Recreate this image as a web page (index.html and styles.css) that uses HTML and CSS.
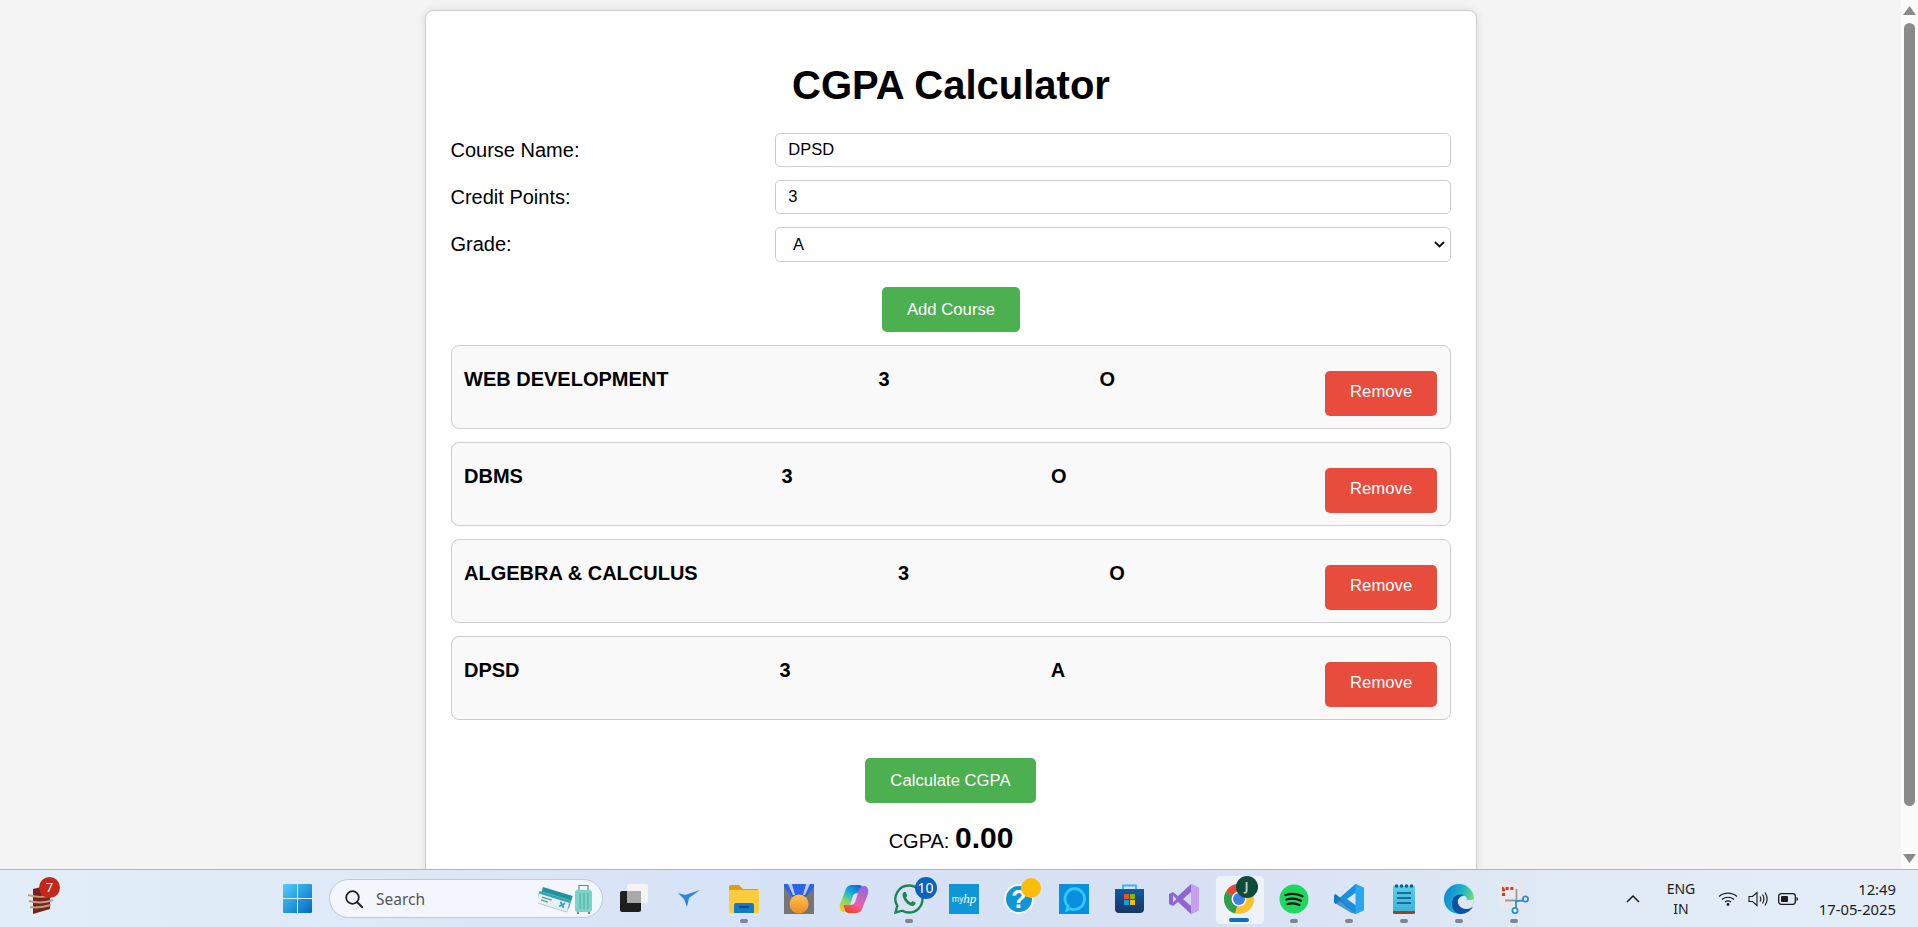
FILE: index.html
```html
<!DOCTYPE html>
<html lang="en">
  <head>
    <meta charset="UTF-8" />
    <title>CGPA Calculator</title>
    <link rel="stylesheet" href="styles.css">
  </head>
  <body>
    <div class="page">
      <main class="scroll-area">
        <section class="card">
          <h1>CGPA Calculator</h1>
          <div class="form-row">
            <label for="name">Course Name:</label>
            <input id="name" type="text" value="DPSD" />
          </div>
          <div class="form-row">
            <label for="credit">Credit Points:</label>
            <input id="credit" type="text" value="3" />
          </div>
          <div class="form-row">
            <label for="grade">Grade:</label>
            <div class="select-wrap">
              <select id="grade"><option>A</option></select>
              <svg class="select-arrow" width="11" height="7" viewBox="0 0 11 7">
                <path d="M1 1l4.5 4.5L10 1" fill="none" stroke="#111" stroke-width="1.9" />
              </svg>
            </div>
          </div>
          <button class="btn btn-green add-btn">Add Course</button>
          <div class="course">
            <span>WEB DEVELOPMENT</span><span>3</span><span>O</span>
            <button class="btn btn-red">Remove</button>
          </div>
          <div class="course">
            <span>DBMS</span><span>3</span><span>O</span>
            <button class="btn btn-red">Remove</button>
          </div>
          <div class="course">
            <span>ALGEBRA &amp; CALCULUS</span><span>3</span><span>O</span>
            <button class="btn btn-red">Remove</button>
          </div>
          <div class="course">
            <span>DPSD</span><span>3</span><span>A</span>
            <button class="btn btn-red">Remove</button>
          </div>
          <button class="btn btn-green calc-btn">Calculate CGPA</button>
          <p class="result">CGPA: <strong>0.00</strong></p>
        </section>
      </main>
      <div class="scrollbar">
        <svg width="13" height="9" viewBox="0 0 13 9"><path d="M6.5 0 13 9H0z" fill="#8a8a8a" /></svg>
        <div class="thumb"></div>
        <svg width="13" height="9" viewBox="0 0 13 9"><path d="M0 0h13L6.5 9z" fill="#8a8a8a" /></svg>
      </div>
    </div>

    <footer class="taskbar">
      <div class="widget">
        <svg width="26" height="30" viewBox="0 0 26 30">
          <path d="M5 5 22 1v24L5 30z" fill="#74261a" />
          <path d="M0 11c8 3 17 2 25 0M1 17c8 2 16 2 24-1M2 23c7 1 14 0 21-2" fill="none" stroke="#c79a80" stroke-width="2" />
        </svg>
        <span class="badge badge-red">7</span>
      </div>
      <svg class="win-logo" width="29" height="29" viewBox="0 0 29 29">
        <defs>
          <linearGradient id="win" x1="0" y1="0" x2="1" y2="1">
            <stop offset="0" stop-color="#52cdfb" />
            <stop offset="1" stop-color="#0069c4" />
          </linearGradient>
        </defs>
        <path d="M1 0h13v14H0V1a1 1 0 0 1 1-1zM15 0h13a1 1 0 0 1 1 1v13H15zM0 15h14v14H1a1 1 0 0 1-1-1zM15 15h14v13a1 1 0 0 1-1 1H15z" fill="url(#win)" />
      </svg>
      <div class="search">
        <svg width="18" height="18" viewBox="0 0 18 18">
          <circle cx="7.5" cy="7.5" r="6.3" fill="none" stroke="#1f1f1f" stroke-width="1.8" />
          <path d="m12 12 5 5" stroke="#1f1f1f" stroke-width="2" stroke-linecap="round" />
        </svg>
        <span class="search-text">Search</span>
        <svg class="search-art" width="58" height="30" viewBox="0 0 58 30">
          <g transform="rotate(17 17 15)">
            <rect x="2" y="7" width="31" height="13" fill="#1f93a0" />
            <rect x="0" y="12" width="32" height="12" fill="#e8f0f3" stroke="#9fb8c4" stroke-width=".6" />
            <rect x="0" y="12" width="32" height="2.5" fill="#2fa6ad" />
            <path d="M4 17h10M4 20h7" stroke="#6d8ea3" stroke-width="1.3" />
            <path d="M23 16l5 5M28 16l-5 5" stroke="#3a9fc0" stroke-width="1.8" />
          </g>
          <rect x="37" y="6" width="17" height="22" rx="2.5" fill="#7bd3c5" />
          <path d="M41 6V1.5h9V6" fill="none" stroke="#62868c" stroke-width="1.2" />
          <path d="M42 9v16M46 9v16M50 9v16" stroke="#4aa99d" stroke-width=".9" />
          <path d="M40 28v2M51 28v2" stroke="#4c5f70" stroke-width="1.5" />
        </svg>
      </div>

      <div class="apps">
        <div class="slot">
          <svg width="30" height="29" viewBox="0 0 30 29">
            <rect x="1" y="7" width="21" height="21" rx="2" fill="#1e1e1e" />
            <rect x="8" y="0" width="21" height="19" rx="2" fill="#f4f4f4" />
            <rect x="8" y="7" width="14" height="12" fill="#a9a9a9" />
          </svg>
        </div>
        <div class="slot">
          <svg width="22" height="17" viewBox="0 0 22 17">
            <path d="M0 3 7 5 13 3 22 0 15 5 11 8 9 17 6 9z" fill="#2d86dd" />
          </svg>
        </div>
        <div class="slot">
          <svg width="30" height="28" viewBox="0 0 30 28">
            <path d="M0 2a2 2 0 0 1 2-2h8l4 4h14a2 2 0 0 1 2 2v4H0z" fill="#d9a00f" />
            <path d="M0 5h30v21a2 2 0 0 1-2 2H2a2 2 0 0 1-2-2z" fill="#fdcb3e" />
            <path d="M5 20a2 2 0 0 1 2-2h16a2 2 0 0 1 2 2v8H5z" fill="#1479c9" />
            <path d="M10 22h10" stroke="#0b3f78" stroke-width="1.5" />
          </svg>
          <i class="dot"></i>
        </div>
        <div class="slot">
          <svg width="30" height="30" viewBox="0 0 30 30">
            <defs>
              <linearGradient id="medal" x1="0" y1="0" x2="0" y2="1">
                <stop offset="0" stop-color="#fcc34a" />
                <stop offset="1" stop-color="#ef8a2c" />
              </linearGradient>
            </defs>
            <rect width="30" height="30" fill="#767676" />
            <path d="M0 0h30v3l-8 10H8L0 3z" fill="#2d63e6" />
            <path d="M4 0h4l3 11H9zM22 0h4l-5 11h-2z" fill="#b5cdf7" />
            <circle cx="15" cy="20" r="9.5" fill="url(#medal)" />
          </svg>
        </div>
        <div class="slot">
          <svg width="30" height="30" viewBox="0 0 30 30">
            <defs>
              <linearGradient id="cop1" x1="0.7" y1="0" x2="0.2" y2="1">
                <stop offset="0" stop-color="#1468d8" />
                <stop offset="0.35" stop-color="#17b3d8" />
                <stop offset="0.65" stop-color="#7ed86a" />
                <stop offset="1" stop-color="#f8c81e" />
              </linearGradient>
              <linearGradient id="cop2" x1="0.7" y1="0" x2="0.2" y2="1">
                <stop offset="0" stop-color="#f4431f" />
                <stop offset="0.35" stop-color="#ef5ea8" />
                <stop offset="1" stop-color="#8a6be8" />
              </linearGradient>
            </defs>
            <path d="M13 1h7c2 0 3.500 1 4 3l1.500 5H19c-3 0-4.500 1-5.500 4l-3 10c-1 3-3 5-6 5C1.500 28 0 24 1 20L7 5c1-3 3.500-4 6-4z" fill="url(#cop1)" />
            <path d="M13 1h7c2 0 3.500 1 4 3l1.500 5H19c-3 0-4.500 1-5.500 4l-3 10c-1 3-3 5-6 5C1.500 28 0 24 1 20L7 5c1-3 3.500-4 6-4z" fill="url(#cop2)" transform="rotate(180 15 15)" />
          </svg>
        </div>
        <div class="slot">
          <svg width="30" height="30" viewBox="0 0 30 30">
            <path d="M15 1.500a13.500 13.500 0 0 1 0 27c-2.500 0-4.700-.7-6.700-1.800L1.500 28.500l1.800-6.600A13.500 13.500 0 0 1 15 1.500z" fill="none" stroke="#1b8755" stroke-width="2.4" />
            <path d="M10 8c-2 1.500-2 4 0 7.500s5 6 8 6.500c2.500 0 4-2 3.500-3.500l-3-1.500-1.500 1.500c-2-.7-4-3-5-5l1.400-1.500L11.800 8z" fill="#1b8755" />
          </svg>
          <span class="badge badge-blue">10</span>
          <i class="dot"></i>
        </div>
        <div class="slot">
          <div class="myhp">my<em>hp</em></div>
        </div>
        <div class="slot">
          <svg width="30" height="30" viewBox="0 0 30 30">
            <circle cx="15" cy="15" r="14" fill="#1296d3" stroke="#f2f8fc" stroke-width="2" />
            <text x="15" y="24" text-anchor="middle" class="help-mark">?</text>
          </svg>
          <i class="yellow-dot"></i>
        </div>
        <div class="slot">
          <svg width="30" height="30" viewBox="0 0 30 30">
            <rect width="30" height="30" fill="#0a8fe0" />
            <path d="M15 4.500a10.500 10.500 0 1 1-4 20.200L8 26l1-3.800A10.500 10.500 0 0 1 15 4.500z" fill="none" stroke="#35c8f0" stroke-width="2.8" />
          </svg>
        </div>
        <div class="slot">
          <svg width="29" height="29" viewBox="0 0 29 29">
            <defs>
              <linearGradient id="bag" x1="0" y1="0" x2="0" y2="1">
                <stop offset="0" stop-color="#0f5aa6" />
                <stop offset="1" stop-color="#1a3564" />
              </linearGradient>
            </defs>
            <path d="M8 5V1.500h13V5" fill="none" stroke="#35b8ea" stroke-width="1.8" />
            <path d="M0 5h29v20a4 4 0 0 1-4 4H4a4 4 0 0 1-4-4z" fill="url(#bag)" />
            <rect x="9" y="10" width="5" height="5" fill="#f25022" />
            <rect x="15" y="10" width="5" height="5" fill="#7fba00" />
            <rect x="9" y="16" width="5" height="5" fill="#00a4ef" />
            <rect x="15" y="16" width="5" height="5" fill="#ffb900" />
          </svg>
        </div>
        <div class="slot">
          <svg width="30" height="30" viewBox="0 0 30 30">
            <path d="M22 0 30 4v22l-8 4L9 18l-5 4-4-2V10l4-2 5 4z" fill="#8f67cf" />
            <path d="M22 0 30 4v22l-8 4z" fill="#c79ff0" />
            <path d="M4 11.500v7l3.500-3.500zM22 8l-8 7 8 7z" fill="#d9d6ef" />
          </svg>
        </div>
        <div class="slot chrome-slot">
          <svg width="30" height="30" viewBox="0 0 30 30">
            <circle cx="15" cy="15" r="15" fill="#fbc22d" />
            <path d="M15 15 2 7.500A15 15 0 0 0 11 29.500z" fill="#2f9e4f" />
            <path d="M15 15 2 7.500a15 15 0 0 1 26 0z" fill="#e4483a" />
            <circle cx="15" cy="15" r="7.5" fill="#fff" />
            <circle cx="15" cy="15" r="6" fill="#3f7fe8" />
          </svg>
          <span class="badge badge-dark">J</span>
          <i class="active-bar"></i>
        </div>
        <div class="slot">
          <svg width="30" height="30" viewBox="0 0 30 30">
            <circle cx="15" cy="15" r="14.5" fill="#1ed760" />
            <path d="M6.500 11c5.500-1.700 12-1.300 17 1.300M7.500 15.500c4.700-1.300 10-1 14.500 1.200M8.500 20c4-1 8.500-.8 12 1" fill="none" stroke="#111" stroke-width="2.3" stroke-linecap="round" />
          </svg>
          <i class="dot"></i>
        </div>
        <div class="slot">
          <svg width="30" height="30" viewBox="0 0 30 30">
            <path d="M21.500 0 30 4v22l-8.500 4L6 16.500 1.500 20 0 18.500v-7L1.500 10 6 13.500zM22 8.500 13 15l9 6.500z" fill="#1b8fdb" />
            <path d="M21.500 0 30 4v22l-8.500 4z" fill="#28a7ee" />
            <path d="M0 11.500 1.500 10l20 20-4-1L0 18.500z" fill="#0c72ba" opacity=".7" />
          </svg>
          <i class="dot"></i>
        </div>
        <div class="slot">
          <svg width="22" height="30" viewBox="0 0 22 30">
            <defs>
              <linearGradient id="pad" x1="0" y1="0" x2="0" y2="1">
                <stop offset="0" stop-color="#58cdea" />
                <stop offset="1" stop-color="#3fb4dc" />
              </linearGradient>
            </defs>
            <path d="M0 3a1 1 0 0 1 1-1h20a1 1 0 0 1 1 1v24H0z" fill="url(#pad)" />
            <path d="M0 27h22v1.500a1.500 1.500 0 0 1-1.500 1.500h-19A1.500 1.500 0 0 1 0 28.500z" fill="#8a4a2a" />
            <path d="M4 9h14M4 14h14M4 19h14" stroke="#1a6d95" stroke-width="1.8" />
            <circle cx="3.5" cy="2" r="1.8" fill="#15607f" />
            <circle cx="8.5" cy="2" r="1.8" fill="#15607f" />
            <circle cx="13.5" cy="2" r="1.8" fill="#15607f" />
            <circle cx="18.5" cy="2" r="1.8" fill="#15607f" />
          </svg>
          <i class="dot"></i>
        </div>
        <div class="slot">
          <svg width="30" height="30" viewBox="0 0 30 30">
            <defs>
              <linearGradient id="edge1" x1="0" y1="0.3" x2="1" y2="0.6">
                <stop offset="0" stop-color="#0f86d8" />
                <stop offset="0.55" stop-color="#1fb5c8" />
                <stop offset="1" stop-color="#7fe06a" />
              </linearGradient>
            </defs>
            <circle cx="15" cy="15" r="15" fill="url(#edge1)" />
            <path d="M13 19c0-4 3-7 7-7 2 0 3 1.500 2.500 3.500 3 1 5.500.8 7.500-.5-.5 5-2 8-6 11-3 2-6 1-8 0-2-2-3-4-3-7z" fill="#dfe7f6" />
            <path d="M8 20c0-7 5-11 12-9-4 1-7 4-6 8 1 4 5 6 9 6 2 0 4-1 6-2-3 4-7 7-12 7-5 0-9-4-9-10z" fill="#0a52a8" />
          </svg>
          <i class="dot"></i>
        </div>
        <div class="slot">
          <svg width="30" height="30" viewBox="0 0 30 30">
            <rect width="22" height="23" rx="2" fill="#e9e9ec" />
            <path d="M4.500 12V4.500H16" fill="none" stroke="#d8391f" stroke-width="3" stroke-dasharray="3 1.8" />
            <path d="M17.500 5v11.500H6" fill="none" stroke="#9b9b9b" stroke-width="1.8" />
            <path d="M24 16.500 17 17l0 7" fill="none" stroke="#2a8fd8" stroke-width="1.8" />
            <circle cx="26.5" cy="15" r="2.6" fill="#fff" stroke="#2a8fd8" stroke-width="1.8" />
            <circle cx="16" cy="26.5" r="2.6" fill="#fff" stroke="#2a8fd8" stroke-width="1.8" />
          </svg>
          <i class="dot"></i>
        </div>
      </div>

      <div class="tray">
        <svg class="chevron" width="14" height="8" viewBox="0 0 14 8">
          <path d="M1 7l6-6 6 6" fill="none" stroke="#1a1a1a" stroke-width="1.5" />
        </svg>
        <div class="lang">ENG<br />IN</div>
        <svg width="20" height="15" viewBox="0 0 20 15">
          <path d="M1 5.500c5-4.600 13-4.600 18 0M4 8.500c3.400-3 8.600-3 12 0M7 11c1.700-1.400 4.300-1.400 6 0" fill="none" stroke="#1c1c1c" stroke-width="1.2" />
          <circle cx="10" cy="13.5" r="1.4" fill="#1c1c1c" />
        </svg>
        <svg width="20" height="16" viewBox="0 0 20 16">
          <path d="M1 5.500h3.500L9 1.500v13l-4.500-4H1z" fill="none" stroke="#1c1c1c" stroke-width="1.1" />
          <path d="M12 5.500c1 1.500 1 3.500 0 5M14.500 3.500c1.700 2.700 1.700 6.300 0 9M17 1.500c2.600 4 2.600 9 0 13" fill="none" stroke="#1c1c1c" stroke-width="1.2" />
        </svg>
        <svg width="20" height="12" viewBox="0 0 20 12">
          <rect x="0.7" y="0.7" width="16.6" height="10.6" rx="2.5" fill="none" stroke="#1c1c1c" stroke-width="1.3" />
          <rect x="3" y="3" width="7" height="6" rx="1" fill="#1c1c1c" />
          <path d="M18.500 4v4c1-.3 1.500-1 1.500-2s-.5-1.700-1.500-2z" fill="#1c1c1c" />
        </svg>
        <div class="clock">12:49<br />17-05-2025</div>
      </div>
    </footer>
  </body>
</html>
```

FILE: styles.css
```css
* {
  box-sizing: border-box;
}

body {
  margin: 0;
  height: 927px;
  overflow: hidden;
  font-family: "Liberation Sans", Arial, sans-serif;
  background-color: #f4f4f4;
}

.page {
  display: flex;
  height: 869px;
  overflow: hidden;
}

.scroll-area {
  flex: 1;
  display: flex;
  justify-content: center;
  align-items: flex-start;
  padding: 10px 0 0 1px;
}

.card {
  width: 1052px;
  padding: 0 25px 25px;
  background-color: white;
  border: 1px solid #ccc;
  border-radius: 8px;
  box-shadow: 0 0 10px rgba(0, 0, 0, 0.1);
  text-align: center;
}

h1 {
  margin: 52px 0 25px;
  font-size: 40px;
}

.form-row {
  display: grid;
  grid-template-columns: 324px 1fr;
  align-items: center;
  margin-bottom: 13px;
  text-align: left;
  font-size: 20px;
}

.form-row label {
  margin-left: -0.5px;
}

input,
select {
  width: 100%;
  height: 34px;
  padding: 0 12.8px 2px 12.3px;
  border: 1px solid #ccc;
  border-radius: 5px;
  background-color: white;
  font-family: inherit;
  font-size: 16.5px;
  color: black;
}

.select-wrap {
  position: relative;
}

select {
  display: block;
  height: 35px;
  padding-left: 17px;
  appearance: none;
}

.select-arrow {
  position: absolute;
  top: 14px;
  right: 6px;
}

.btn {
  height: 45px;
  padding: 0 25px;
  border: none;
  border-radius: 5px;
  color: white;
  font-family: inherit;
  font-size: 16.7px;
}

.btn-green {
  background-color: #4caf50;
}

.btn-red {
  margin-top: 12px;
  padding-bottom: 2px;
  background-color: #e74c3c;
}

.add-btn {
  margin: 12px 0 13px;
}

.course {
  display: flex;
  justify-content: space-between;
  align-items: flex-start;
  height: 84px;
  margin-bottom: 13px;
  padding: 12.5px 12.8px 12.5px 12px;
  background-color: #f9f9f9;
  border: 1px solid #ccc;
  border-radius: 8px;
  font-size: 20px;
  font-weight: bold;
}

.course span {
  margin-top: 9px;
}

.calc-btn {
  margin: 25px 0 0 -1px;
}

.result {
  margin: 18px 0 0;
  font-size: 20px;
}

.result strong {
  font-size: 30px;
}

.scrollbar {
  width: 17px;
  padding-top: 6px;
  display: flex;
  flex-direction: column;
  align-items: center;
  background-color: #fbfbfb;
}

.thumb {
  width: 11px;
  height: 783px;
  margin: 8px 0 auto;
  background-color: #8a8a8a;
  border-radius: 6px;
}

.scrollbar svg:last-child {
  margin-bottom: 6px;
}

/* taskbar */
.taskbar {
  display: flex;
  align-items: center;
  height: 58px;
  border-top: 1px solid #aeb6c2;
  background: linear-gradient(90deg, #e1edf7, #dde9f6 20%, #d6e2f6 40%, #d8e1f3 62%, #dfeaf6 82%, #e3eef8);
  font-family: "Noto Sans", sans-serif;
  color: #1c1c1c;
}

.widget {
  position: relative;
  width: 26px;
  height: 30px;
  margin-left: 28px;
}

.widget svg {
  display: block;
}

.badge {
  position: absolute;
  display: flex;
  align-items: center;
  justify-content: center;
  width: 21px;
  height: 21px;
  border-radius: 50%;
  color: white;
  font-size: 13px;
}

.badge-red {
  top: -7px;
  left: 11px;
  background-color: #c4281c;
}

.badge-blue {
  top: -7px;
  left: 33px;
  width: 22px;
  height: 22px;
  background-color: #0b63bb;
  font-size: 14px;
}

.badge-dark {
  top: -8px;
  left: 24px;
  width: 22px;
  height: 22px;
  background-color: #0f4a3a;
  color: #b9c9c2;
  font-size: 12px;
  font-weight: bold;
}

.win-logo {
  margin-left: 229px;
  flex-shrink: 0;
}

.search {
  display: flex;
  align-items: center;
  width: 274px;
  height: 39px;
  margin-left: 17px;
  padding-left: 15px;
  background-color: #f3f7fd;
  border: 1px solid #bcc8dc;
  border-radius: 20px;
  overflow: hidden;
}

.search-text {
  margin-left: 13px;
  font-size: 15.5px;
  color: #555;
}

.search-art {
  margin-left: auto;
  margin-right: 6px;
}

.apps {
  display: flex;
  margin-left: 3.5px;
}

.slot {
  position: relative;
  display: flex;
  align-items: center;
  justify-content: center;
  width: 55px;
  height: 30px;
}

.slot svg {
  display: block;
}

.dot {
  position: absolute;
  left: 23.5px;
  bottom: -9px;
  width: 8px;
  height: 4px;
  background-color: #7d8590;
  border-radius: 2px;
}

.myhp {
  display: flex;
  align-items: center;
  justify-content: center;
  width: 30px;
  height: 30px;
  background-color: #0e96d6;
  color: white;
  font-size: 8px;
}

.myhp em {
  font-family: "Liberation Serif", serif;
  font-size: 13px;
}

.help-mark {
  fill: white;
  font-family: "Liberation Sans", sans-serif;
  font-size: 25px;
  font-weight: bold;
}

.yellow-dot {
  position: absolute;
  top: -6px;
  left: 29px;
  width: 20px;
  height: 20px;
  background-color: #fcbc0a;
  border-radius: 50%;
}

.chrome-slot::before {
  content: "";
  position: absolute;
  top: -9px;
  left: 3.5px;
  width: 48px;
  height: 48px;
  background-color: #eef2fa;
  border: 1px solid #dde3ee;
  border-radius: 5px;
}

.chrome-slot svg {
  position: relative;
}

.active-bar {
  position: absolute;
  left: 17.5px;
  bottom: -8px;
  width: 20px;
  height: 4px;
  background-color: #0b6fc9;
  border-radius: 2px;
}

.tray {
  display: flex;
  align-items: center;
  margin-left: auto;
  padding-right: 22px;
}

.chevron {
  margin-right: 21px;
}

.lang {
  width: 40px;
  margin-right: 17px;
  text-align: center;
  font-size: 14px;
  line-height: 20px;
}

.tray svg + svg {
  margin-left: 10px;
}

.clock {
  width: 80px;
  margin-left: 18px;
  text-align: right;
  font-size: 14.8px;
  line-height: 20px;
}
```
